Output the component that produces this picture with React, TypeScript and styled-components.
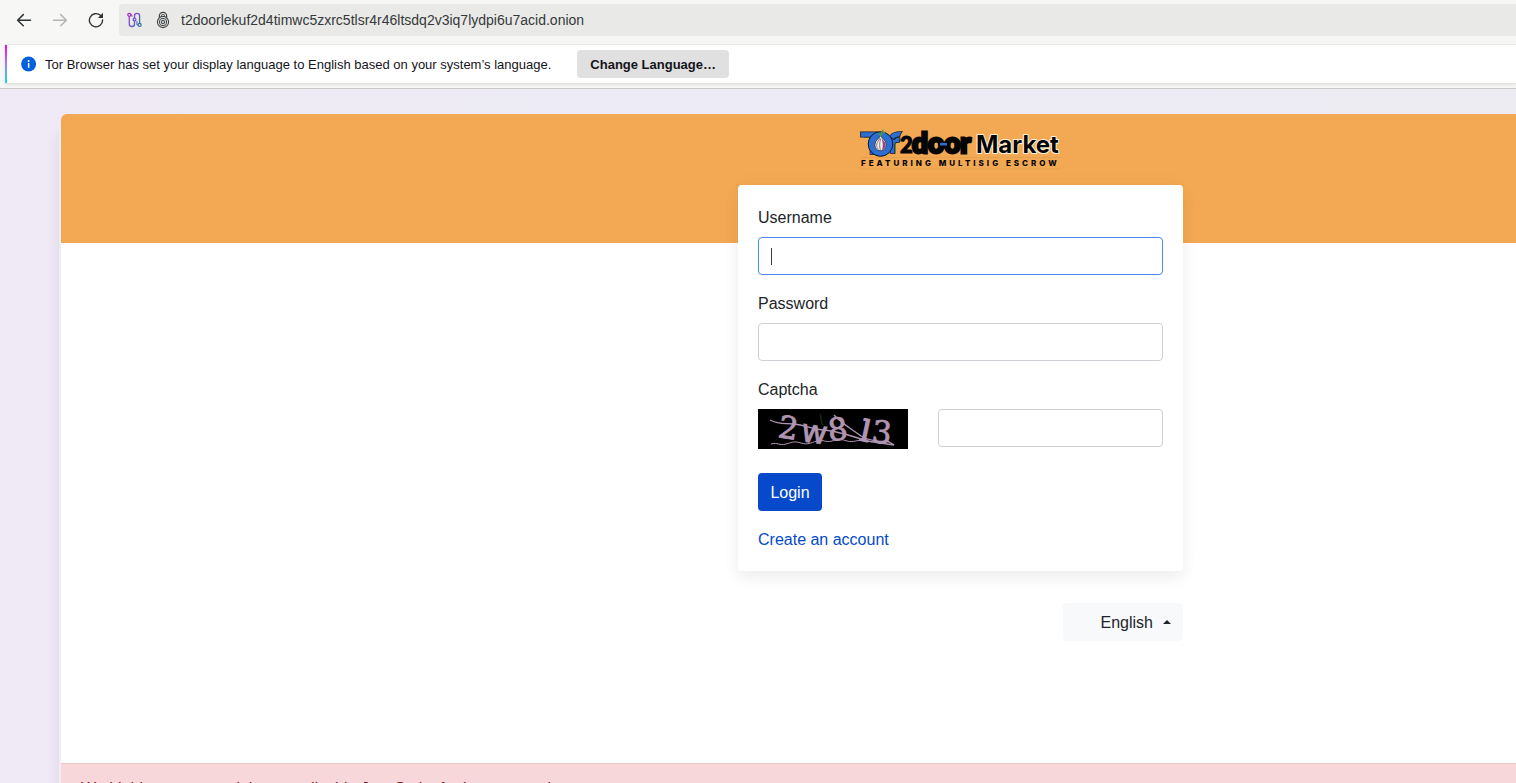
import React from "react";
import styled, { createGlobalStyle } from "styled-components";

const GlobalStyle = createGlobalStyle`
  *, *::before, *::after { box-sizing: border-box; }
  body {
    margin: 0;
    font-family: "Liberation Sans", Arial, sans-serif;
    color: #212529;
    overflow: hidden;
  }
`;

const Window = styled.div`
  display: flex;
  flex-direction: column;
  height: 100vh;
  overflow: hidden;
  background: #f7f7f5;
`;

const Toolbar = styled.header`
  display: flex;
  align-items: center;
  height: 40px;
  padding-left: 8px;
`;

const ToolButton = styled.button<{ $dim?: boolean }>`
  display: flex;
  align-items: center;
  justify-content: center;
  width: 32px;
  height: 32px;
  margin-right: 4px;
  padding: 0;
  border: 0;
  background: none;
  color: ${(p) => (p.$dim ? "#b4b4b3" : "#2e3436")};
`;

const AddressBar = styled.div`
  display: flex;
  flex: 1;
  align-items: center;
  gap: 12px;
  height: 32px;
  margin-left: 3px;
  padding-left: 8px;
  border-radius: 4px 0 0 4px;
  background: #e9e9e7;
`;

const AddressInput = styled.input`
  flex: 1;
  height: 24px;
  margin-left: -2px;
  padding: 0;
  border: 0;
  outline: 0;
  background: none;
  color: #35393b;
  font: 14px/24px "Liberation Sans", Arial, sans-serif;
`;

const Notice = styled.section`
  display: flex;
  flex-shrink: 0;
  align-items: center;
  height: 39px;
  margin: 4px 0 5px 5px;
  padding-left: 16px;
  border-top: 1px solid #e9e9e8;
  box-shadow: 0 2px 2px #e2e2e0;
  background: linear-gradient(#ff00e6, #9980ff 50%, #0de0e6) left / 2px 100% no-repeat, #fff;
  font-size: 13px;
  color: #15141a;
`;

const NoticeText = styled.p`
  margin: 0 26px 0 8px;
`;

const NoticeButton = styled.button`
  height: 28px;
  padding: 0 13px;
  border: 0;
  border-radius: 4px;
  background: #e0e0e0;
  color: #15141a;
  font: bold 13px "Liberation Sans", Arial, sans-serif;
`;

const Viewport = styled.div`
  flex: 1;
  min-height: 0;
  overflow: hidden;
  border-top: 1px solid #c9c8c6;
  background: linear-gradient(90deg, #f0e9f6, #eeebf3 240px, #edebf6 650px, #edecf2);
`;

const Page = styled.div`
  width: calc(100% + 404px);
  padding: 25px 60px 0 61px;
`;

const Sheet = styled.main`
  border-radius: 6px 6px 0 0;
  background: linear-gradient(#f3a953 129px, #fff 129px);
  box-shadow: 0 4px 0 2px #efedf3, 0 20px 16px rgba(40, 30, 70, 0.12);
`;

const Center = styled.div`
  display: flex;
  flex-direction: column;
  align-items: center;
  padding: 14px 0 122px;
`;

const Column = styled.div`
  display: flex;
  flex-direction: column;
  width: 445px;
  margin-top: 12px;
`;

const Card = styled.form`
  padding: 20px;
  border-radius: 4px;
  background: #fff;
  box-shadow: 0 8px 16px rgba(0, 0, 0, 0.05), 0 0 20px rgba(0, 0, 0, 0.04);
`;

const Field = styled.div`
  display: flex;
  flex-direction: column;
  margin-bottom: 16px;
`;

const Label = styled.label`
  margin: 1px 0 7px;
  font-size: 16px;
  line-height: 24px;
`;

const Input = styled.input<{ $active?: boolean }>`
  width: 100%;
  height: 38px;
  padding: 6px 12px;
  border: 1px solid ${(p) => (p.$active ? "#4c88f5" : "#ced0d6")};
  border-radius: 4px;
  outline: 0;
  background: #fff;
  color: #495057;
  font: 16px/24px "Liberation Sans", Arial, sans-serif;
`;

const ActiveField = styled.div`
  position: relative;
`;

const Caret = styled.span`
  position: absolute;
  left: 13px;
  top: 11px;
  width: 1px;
  height: 17px;
  background: #343a40;
`;

const CaptchaRow = styled.div`
  display: grid;
  grid-template-columns: 150px 225px;
  justify-content: space-between;
  margin-bottom: 8px;
`;

const LoginButton = styled.button`
  min-width: 64px;
  height: 38px;
  padding: 2px 12px 0;
  border: 0;
  border-radius: 4px;
  background: #064acb;
  color: #fff;
  font: 16px/24px "Liberation Sans", Arial, sans-serif;
`;

const AccountLink = styled.a`
  display: block;
  width: max-content;
  margin: 17px 0 -1px;
  color: #064acb;
  font-size: 16px;
  line-height: 24px;
  text-decoration: none;
`;

const LanguageButton = styled.button`
  display: flex;
  align-items: center;
  justify-content: flex-end;
  gap: 10px;
  align-self: flex-end;
  width: 120px;
  height: 38px;
  margin-top: 32px;
  padding: 2px 12px 0;
  border: 0;
  border-radius: 4px;
  background: #f8f9fb;
  color: #212529;
  font: 16px/24px "Liberation Sans", Arial, sans-serif;

  svg {
    margin-bottom: 2px;
  }
`;

const Alert = styled.p`
  margin: 0;
  padding: 13px 20px;
  border-top: 1px solid #f0c5ca;
  background: #f7d7da;
  color: #721c24;
  font-size: 16px;
  line-height: 24px;
`;

const BackIcon = () => (
  <svg width="16" height="16" viewBox="0 0 16 16" fill="none" stroke="currentColor" strokeWidth="1.5" strokeLinecap="round" strokeLinejoin="round" aria-hidden="true">
    <path d="M14.5 8.2H1.8M7.3 2.6 1.6 8.2l5.7 5.6" />
  </svg>
);

const ForwardIcon = () => (
  <svg width="16" height="16" viewBox="0 0 16 16" fill="none" stroke="currentColor" strokeWidth="1.5" strokeLinecap="round" strokeLinejoin="round" aria-hidden="true">
    <path d="M1.5 8.2h12.7M8.7 2.6l5.7 5.6-5.7 5.6" />
  </svg>
);

const ReloadIcon = () => (
  <svg width="16" height="16" viewBox="0 0 16 16" fill="none" aria-hidden="true">
    <path d="M12.4 3.3A6.6 6.6 0 1 0 14.6 8" stroke="currentColor" strokeWidth="1.4" strokeLinecap="round" />
    <path d="M15 .8v5.1H9.9z" fill="currentColor" />
  </svg>
);

const CircuitIcon = () => (
  <svg width="16" height="16" viewBox="0 0 16 16" fill="none" aria-hidden="true">
    <defs>
      <linearGradient id="circuit" x1="0" y1="0" x2="16" y2="14" gradientUnits="userSpaceOnUse">
        <stop stopColor="#c414cf" />
        <stop offset=".5" stopColor="#7059c9" />
        <stop offset="1" stopColor="#167fa5" />
      </linearGradient>
    </defs>
    <g stroke="url(#circuit)" strokeWidth="1.3">
      <circle cx="2.3" cy="2.8" r="1.5" />
      <circle cx="12.6" cy="12.9" r="1.5" />
      <circle cx="7.5" cy="7.6" r="1.4" />
      <path d="M2.3 4.3v7.6a2.6 2.6 0 0 0 5.2 0V9M7.5 6.2V4a2.5 2.5 0 0 1 5.1 0v7.4" />
      <path d="M3.8 2.8h1.1v2M9.9 9v3.9h1.2" strokeWidth="1" />
    </g>
  </svg>
);

const OnionIcon = () => (
  <svg width="16" height="18" viewBox="0 0 16 18" fill="none" stroke="#3f4446" aria-hidden="true">
    <path d="M4.3 6.4V5a3.7 3.7 0 0 1 7.4 0v1.4" strokeWidth="1.2" />
    <path d="M6.3 5.6V5a1.7 1.7 0 0 1 3.4 0v.6" strokeWidth=".8" />
    <circle cx="8" cy="11" r="5.6" strokeWidth="1.1" />
    <circle cx="8" cy="11" r="3.7" strokeWidth="1" />
    <circle cx="8" cy="11" r="1.8" strokeWidth="1" />
    <circle cx="8" cy="11" r=".3" strokeWidth=".6" />
  </svg>
);

const InfoIcon = () => (
  <svg width="16" height="16" viewBox="0 0 16 16" aria-hidden="true">
    <circle cx="7.6" cy="8" r="7.5" fill="#0060df" />
    <circle cx="7.6" cy="4.9" r="1" fill="#fff" />
    <rect x="6.9" y="6.8" width="1.5" height="5" rx=".6" fill="#fff" />
  </svg>
);

const Logo = () => (
  <svg width="204" height="45" viewBox="0 0 204 45" overflow="visible" role="img" aria-label="Tor2door Market, featuring multisig escrow">
    <g fontFamily="Lato, sans-serif" fontWeight="900">
      <g fill="#2c6fd0" stroke="#0c1628" strokeWidth="1.6" paintOrder="stroke">
        <text x="5" y="26" fontSize="28">T</text>
        <path d="M2 4.2h17v4.6H2z" />
        <text x="30" y="25" fontSize="28">r</text>
        <path d="M31 8.5c1.5-3 4-4.4 11.4-4.4-1 1.3-1.6 2.8-2 4.4-3 0-4.4.6-5.4 2.5z" />
      </g>
      <circle cx="21.5" cy="16" r="12.3" fill="#2c6fd0" stroke="#0c1628" />
      <g fill="#050505" stroke="#050505">
        <text x="41" y="25.4" fontSize="22" strokeWidth="1">2</text>
        <text x="53" y="25" fontSize="28" strokeWidth="2.8">door</text>
      </g>
    </g>
    <path d="M21.5 7.2c-.3 2.6-5.6 4.7-5.6 9.6 0 3.7 2.3 6 5.4 6s5.9-2.2 5.9-6c0-4.8-4.7-6.4-5.7-9.6z" fill="#f7efe2" stroke="#3a2946" strokeWidth=".8" />
    <path d="M22.4 9.7c1.2 2.2 4.2 4 4.2 7.3 0 2.4-1.6 4.5-3.7 5 1.5-3.4 1-8-.5-12.3z" fill="#8a4a96" />
    <path d="M21 10c-1.6 3-3.3 4.4-3.3 7.2 0 1.9.8 3.2 2 4.3M21.6 10.6c-.9 4-1.5 7-.2 11.6" stroke="#5b4a5e" strokeWidth=".7" fill="none" />
    <path d="M21.6 8.4c0-2.5.8-4.4 2.5-6.6M22 7.4c1-2 2.5-3 4.3-3.2M21.4 7.4c-.6-1.4-1.3-2-2.2-2.5" stroke="#4c9a3d" strokeWidth="1.2" fill="none" />
    <path d="M80.5 16.2h9" stroke="#050505" strokeWidth="4.6" />
    <path d="M81 16.2h7" stroke="#2c6fd0" strokeWidth="2.6" />
    <text x="117" y="25" fontFamily="Inter, sans-serif" fontWeight="700" fontSize="24" fill="#050505" stroke="#fff3e2" strokeWidth="2" strokeLinejoin="round" paintOrder="stroke">Market</text>
    <path d="M2 29.5h200M2 41h200" stroke="#dc9a4c" strokeWidth=".6" />
    <text x="2" y="38" fontFamily="Inter, sans-serif" fontWeight="800" fontSize="8" letterSpacing="3" fill="#050505">FEATURING MULTISIG ESCROW</text>
  </svg>
);

const CaptchaImage = () => (
  <svg width="150" height="40" viewBox="0 0 150 40" role="img" aria-label="Captcha image">
    <rect width="150" height="40" fill="#000" />
    <g fill="#b095b2" stroke="#b095b2" strokeWidth=".8" fontFamily="DejaVu Serif, serif" fontSize="31">
      <text transform="translate(19 28) rotate(9)">2</text>
      <text transform="translate(42 32) rotate(8)" fontSize="32" fontFamily="DejaVu Sans, sans-serif">w</text>
      <text transform="translate(71 32) rotate(-6)">8</text>
      <text transform="translate(101 31) rotate(12)" fontSize="29" strokeWidth="1.6">l</text>
      <text transform="translate(113 33) rotate(6)">3</text>
    </g>
    <g fill="none" stroke="#b095b2" strokeWidth="1.3">
      <path d="M12 11c9 5 15 3 24 4 12 1 16 5 29 6 15 1 29 6 44 11l27 4" />
      <path d="M76 6c8 9 18 14 27 21 6 4 19 6 24 5 4 0 6 2 9 4" />
      <path d="M13 35c7-2 8 2 15 0s8-3 15-1 9 0 16-2 8 2 15 0 8-2 15 0 10-2 18 0" strokeWidth="1" />
    </g>
    <path d="M62 5c2 4 0 7 3 11" fill="none" stroke="#0d4a16" />
  </svg>
);

const CaretUp = () => (
  <svg width="8" height="4" viewBox="0 0 8 4" aria-hidden="true">
    <path d="M0 4 4 0l4 4z" fill="#212529" />
  </svg>
);

export default function App() {
  return (
    <Window>
      <GlobalStyle />
      <Toolbar>
        <ToolButton aria-label="Back"><BackIcon /></ToolButton>
        <ToolButton $dim aria-label="Forward"><ForwardIcon /></ToolButton>
        <ToolButton aria-label="Reload"><ReloadIcon /></ToolButton>
        <AddressBar>
          <CircuitIcon />
          <OnionIcon />
          <AddressInput aria-label="Address" readOnly value="t2doorlekuf2d4timwc5zxrc5tlsr4r46ltsdq2v3iq7lydpi6u7acid.onion" />
        </AddressBar>
      </Toolbar>
      <Notice>
        <InfoIcon />
        <NoticeText>Tor Browser has set your display language to English based on your system’s language.</NoticeText>
        <NoticeButton>Change Language…</NoticeButton>
      </Notice>
      <Viewport>
        <Page>
          <Sheet>
            <Center>
              <Logo />
              <Column>
                <Card onSubmit={(e) => e.preventDefault()}>
                  <Field>
                    <Label htmlFor="username">Username</Label>
                    <ActiveField>
                      <Input id="username" $active />
                      <Caret />
                    </ActiveField>
                  </Field>
                  <Field>
                    <Label htmlFor="password">Password</Label>
                    <Input id="password" type="password" />
                  </Field>
                  <Field>
                    <Label htmlFor="captcha">Captcha</Label>
                    <CaptchaRow>
                      <CaptchaImage />
                      <Input id="captcha" />
                    </CaptchaRow>
                  </Field>
                  <LoginButton type="submit">Login</LoginButton>
                  <AccountLink href="#register">Create an account</AccountLink>
                </Card>
                <LanguageButton type="button">English <CaretUp /></LanguageButton>
              </Column>
            </Center>
            <Alert>We highly recommend that you disable JavaScript for better security.</Alert>
          </Sheet>
        </Page>
      </Viewport>
    </Window>
  );
}
